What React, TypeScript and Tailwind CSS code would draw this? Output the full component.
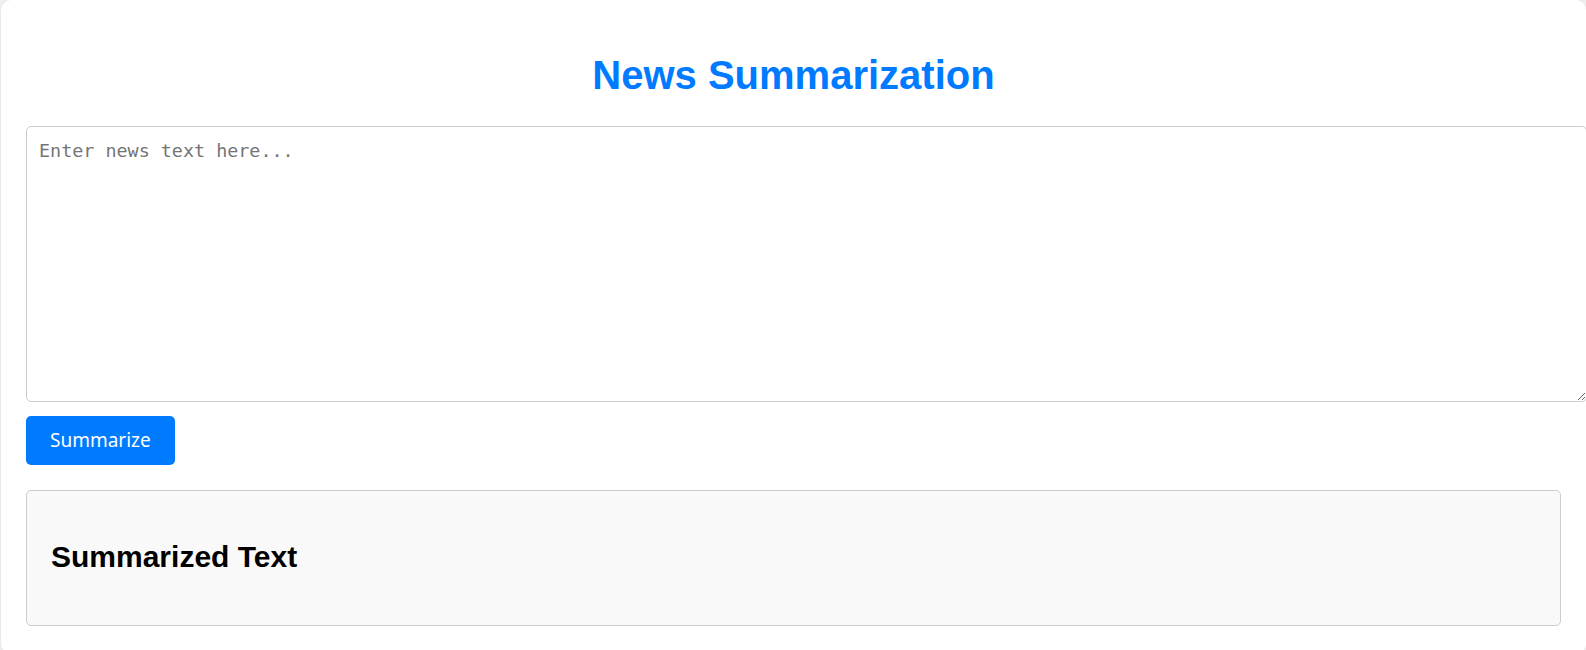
import { useState } from 'react';

export default function App() {
    const [text, setText] = useState('');
    const [summary, setSummary] = useState('');

    const handleSummarize = () => {
        // naive placeholder: first two sentences
        const parts = text.split(/(?<=[.!?])\s+/).slice(0, 2);
        setSummary(parts.join(' '));
    };

    return (
        <div className="min-h-[650px] bg-[#f4f4f4] pl-[1px] overflow-hidden font-['Liberation_Sans',Arial,sans-serif]">
            <div className="w-[1585px] min-h-[654px] bg-white rounded-[10px] shadow-[0_0_10px_rgba(0,0,0,0.1)] px-[25px] pt-[52px] pb-[22px]">
                {/* Title */}
                <h1 className="text-center text-[40px] leading-[46px] font-bold text-[#007bff] mb-[28px]">
                    News Summarization
                </h1>

                {/* Input */}
                <textarea
                    value={text}
                    onChange={(e) => setText(e.target.value)}
                    placeholder="Enter news text here..."
                    className="block box-content w-full h-[250px] p-[12px] border border-[#cccccc] rounded-[5px] bg-white font-['DejaVu_Sans_Mono',monospace] text-[18.4px] leading-[24px] text-[#222] placeholder:text-[#757575] outline-none"
                />

                <button
                    onClick={handleSummarize}
                    className="mt-[14px] h-[49px] px-6 rounded-[5px] bg-[#007bff] text-white text-[19px] font-['Noto_Sans',sans-serif] cursor-pointer"
                >
                    Summarize
                </button>

                {/* Result */}
                <div className="mt-[25px] min-h-[136px] border border-[#cccccc] rounded-[5px] bg-[#f9f9f9] px-[24px] pt-[48px] pb-[51px]">
                    <h2 className="text-[30px] leading-[35px] font-bold text-black">Summarized Text</h2>
                    {summary && <p className="mt-3 text-[16px] text-[#333]">{summary}</p>}
                </div>
            </div>
        </div>
    );
}
